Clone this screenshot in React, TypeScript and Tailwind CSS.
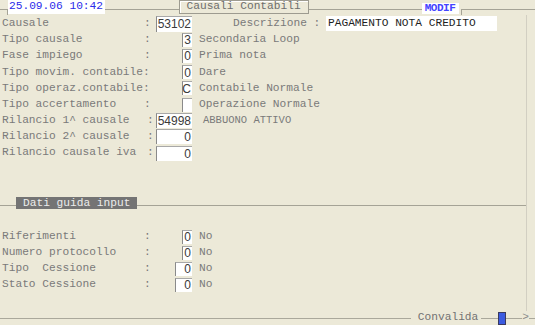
import React from "react";

const MONO = "font-['Liberation_Mono','Courier_New',monospace]";
const SANS = "font-['Liberation_Sans',Arial,sans-serif]";

function Box({ w, h = 15, value, align = "end" }: { w: number; h?: number; value: string; align?: "end" | "start" }) {
  return (
    <div
      className={`bg-white border-l border-t border-l-[#8a8a8a] border-t-[#a8a8a8] flex items-center ${
        align === "end" ? "justify-end pr-[1px]" : "justify-start pl-[1px]"
      } ${SANS} text-[12px] text-[#3a3a3a] leading-none`}
      style={{ width: w, height: h }}
    >
      {value}
    </div>
  );
}

type RowProps = {
  label: string;
  colon?: boolean;
  labelW?: number;
  boxW: number;
  boxH?: number;
  value: string;
  desc?: string;
  descMl?: number;
  h?: number;
  descClass?: string;
};

function Row({ label, colon = true, labelW = 144, boxW, boxH, value, desc, descMl = 7, h = 16.2, descClass = "" }: RowProps) {
  return (
    <div className="flex items-center" style={{ height: h }}>
      <div className="pl-[2px] whitespace-pre shrink-0" style={{ width: labelW }}>
        {label}
      </div>
      <div className="w-[7px] shrink-0">{colon ? ":" : ""}</div>
      <div className="flex justify-end shrink-0" style={{ width: 192 - labelW - 7 }}>
        <Box w={boxW} h={boxH} value={value} />
      </div>
      {desc !== undefined && (
        <div className={`whitespace-pre ${descClass}`} style={{ marginLeft: descMl }}>
          {desc}
        </div>
      )}
    </div>
  );
}

export default function App() {
  return (
    <div className={`w-[535px] h-[325px] bg-[#ECE9D8] overflow-hidden flex flex-col ${MONO} text-[11.2px] text-[#7a7a7a] leading-none`}>
      {/* Header */}
      <div className="flex h-[15px] shrink-0">
        <div className="w-[7px] mt-[9px] border-t border-[#a5a396]" />
        <div className="w-px mt-[9px] h-[6px] bg-[#a5a396]" />
        <div className="w-[97px] h-[14px] bg-white text-[#2b2bea] flex items-center pl-[1px]">25.09.06 10:42</div>
        <div className="flex-1 mt-[9px] border-t border-[#a5a396]" />
        <div className="w-[130px] h-[14px] border border-[#9d9b90] shadow-[inset_1px_1px_0_#ffffff] flex items-center pl-[7px] text-[#6e6e6e]">
          Causali Contabili
        </div>
        <div className="w-[113px] mt-[9px] border-t border-[#a5a396]" />
        <div className="w-[37px] h-[11px] mt-[3px] bg-white text-[#4444ff] font-bold flex items-center justify-center text-[11px] tracking-[-0.5px]">
          MODIF
        </div>
        <div className="w-[2px]" />
        <div className="w-px mt-[9px] bg-[#a5a396]" />
        <div className="flex-1 mt-[9px] border-t border-[#a5a396]" />
      </div>

      {/* Main body */}
      <div className="flex-1 flex flex-col mr-[8px] border-r border-[#d2cfc2]">
        <div className="mt-[0.5px]">
          <div className="flex items-center h-[16.2px]">
            <div className="pl-[2px] w-[144px] shrink-0">Causale</div>
            <div className="w-[7px] shrink-0">:</div>
            <div className="w-[41px] flex justify-end shrink-0">
              <Box w={36} h={16} value="53102" />
            </div>
            <div className="ml-[41px] w-[93px] whitespace-pre">Descrizione :</div>
            <div className="w-[171px] h-[15px] bg-white flex items-center pl-[2px] text-[#1e1e1e]">PAGAMENTO NOTA CREDITO</div>
          </div>
          <Row label="Tipo causale" boxW={10} boxH={14} value="3" desc="Secondaria Loop" />
          <Row label="Fase impiego" boxW={10} boxH={14} value="0" desc="Prima nota" />
          <Row label="Tipo movim. contabile:" colon={false} boxW={10} boxH={14} value="0" desc="Dare" />
          <Row label="Tipo operaz.contabile:" colon={false} boxW={10} boxH={14} value="C" desc="Contabile Normale" />
          <Row label="Tipo accertamento" boxW={10} boxH={14} value="" desc="Operazione Normale" />
          <Row label="Rilancio 1^ causale" labelW={147} boxW={36} value="54998" desc="ABBUONO ATTIVO" descMl={11} descClass="text-[10.5px]" />
          <Row label="Rilancio 2^ causale" labelW={147} boxW={36} value="0" />
          <Row label="Rilancio causale iva" labelW={147} boxW={36} value="0" />
        </div>

        {/* Dati guida input */}
        <div className="flex h-[12px] mt-[36px]">
          <div className="w-[16px] mt-[8px] border-t border-[#a5a396]" />
          <div className="w-[121px] h-[12px] bg-[#747474] text-[#ececec] flex items-center pl-[7px]">Dati guida input</div>
          <div className="flex-1 mt-[8px] border-t border-[#a5a396]" />
        </div>

        <div className="mt-[19.4px]">
          <Row h={16} label="Riferimenti" boxW={10} boxH={14} value="0" desc="No" />
          <Row h={16} label="Numero protocollo" boxW={10} boxH={14} value="0" desc="No" />
          <Row h={16} label="Tipo  Cessione" boxW={17} boxH={14} value="0" desc="No" />
          <Row h={16} label="Stato Cessione" boxW={17} boxH={14} value="0" desc="No" />
        </div>
      </div>

      {/* Footer */}
      <div className="flex items-center h-[14px] shrink-0">
        <div className="flex-1 h-px bg-[#aaa89b]" />
        <div className="ml-[7px] mr-[3px] text-[#737373]">Convalida</div>
        <div className="w-[17px] h-px bg-[#aaa89b]" />
        <div className="w-[8px] h-[13px] bg-[#3b5be0] border border-[#3a3a60]" />
        <div className="w-[16px] h-px bg-[#aaa89b]" />
        <div className="text-[#8a8a8a]">&gt;</div>
        <div className="w-[6px] h-px bg-[#aaa89b]" />
      </div>
    </div>
  );
}
